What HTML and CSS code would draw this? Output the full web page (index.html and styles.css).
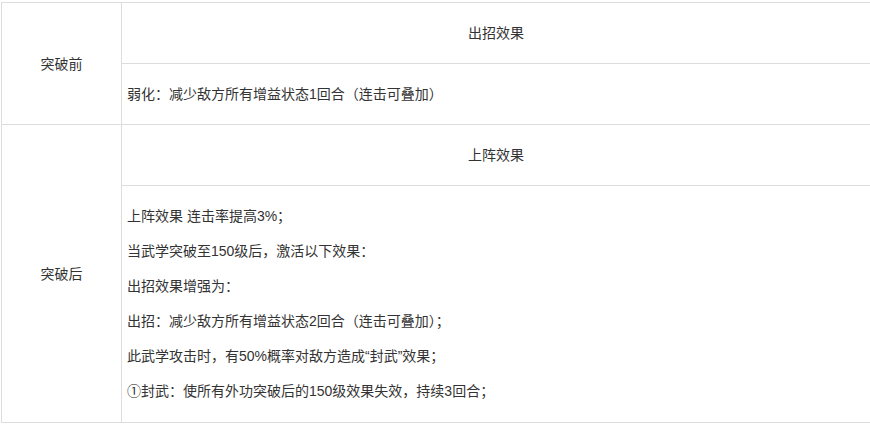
FILE: index.html
```html
<!DOCTYPE html>
<html lang="zh-CN">
<head>
<meta charset="utf-8">
<title>突破效果</title>
<link rel="stylesheet" href="styles.css">
</head>
<body>
<table class="skill-table">
  <tbody>
    <tr>
      <td class="label" rowspan="2">突破前</td>
      <td class="head"><p>出招效果</p></td>
    </tr>
    <tr>
      <td class="body"><p>弱化：减少敌方所有增益状态1回合（连击可叠加）</p></td>
    </tr>
    <tr>
      <td class="label" rowspan="2">突破后</td>
      <td class="head"><p>上阵效果</p></td>
    </tr>
    <tr>
      <td class="body body-multi">
        <p>上阵效果 连击率提高3%；</p>
        <p>当武学突破至150级后，激活以下效果：</p>
        <p>出招效果增强为：</p>
        <p>出招：减少敌方所有增益状态2回合（连击可叠加）；</p>
        <p>此武学攻击时，有50%概率对敌方造成“封武”效果；</p>
        <p>①封武：使所有外功突破后的150级效果失效，持续3回合；</p>
      </td>
    </tr>
  </tbody>
</table>
</body>
</html>
```

FILE: styles.css
```css
html, body {
  margin: 0;
  padding: 0;
  background: #fff;
}

body {
  padding: 2px 0 0 1px;
  font-family: "Liberation Sans", "Noto Sans CJK SC", sans-serif;
  font-size: 14px;
  color: #333;
  overflow: hidden;
}

.skill-table {
  border-collapse: collapse;
  width: 870px;
  table-layout: fixed;
}

.skill-table td {
  border: 1px solid #ddd;
  padding: 6px 6px 5px;
  line-height: 21px;
  vertical-align: middle;
}

.skill-table td p {
  margin: 14px 0;
}

.skill-table .label {
  width: 107px;
  text-align: center;
}

.skill-table .head {
  text-align: center;
}

.skill-table .body {
  text-align: left;
  padding-left: 5px;
}

.skill-table .body-multi {
  padding: 6px 6px 6px 5px;
}
```
